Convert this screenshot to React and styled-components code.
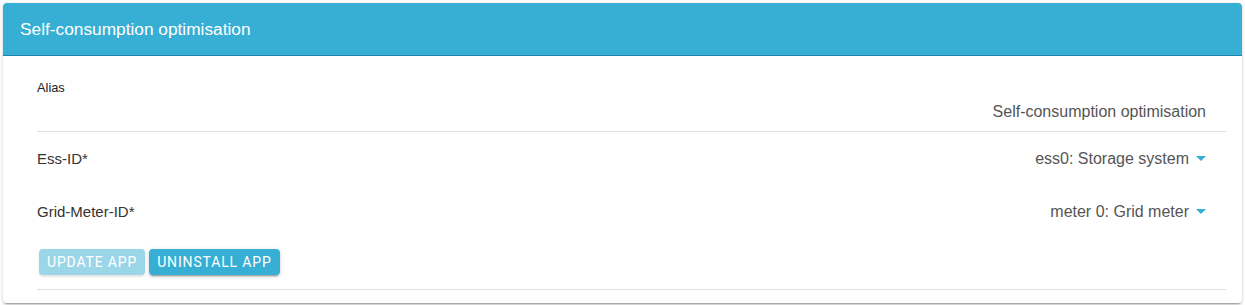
import React from "react";
import styled, { createGlobalStyle } from "styled-components";

const Global = createGlobalStyle`
  html, body { margin: 0; padding: 0; background: #ffffff; }
  body { font-family: "Liberation Sans", Arial, sans-serif; }
`;

const Page = styled.div`
  padding: 3px 3px 3px 3px;
`;

const Card = styled.section`
  background: #fff;
  border-radius: 4px;
  overflow: hidden;
  box-shadow: 0 3px 1px -2px rgba(0,0,0,0.2), 0 2px 2px 0 rgba(0,0,0,0.14), 0 1px 5px 0 rgba(0,0,0,0.12);
`;

const Header = styled.header`
  height: 52px;
  display: flex;
  align-items: center;
  padding: 0 17px;
  background: #37aed3;
  border-bottom: 1px solid #1f85a6;
  color: #fff;
  font-family: "Liberation Sans", Arial, sans-serif;
  font-size: 17.3px;
`;

const Body = styled.div`
  padding: 0 16px 13px 34px;
`;

const AliasItem = styled.div`
  display: flex;
  flex-direction: column;
  padding: 24px 20px 9px 0;
  border-bottom: 1px solid #dedede;
`;

const SmallLabel = styled.label`
  font-size: 12.8px;
  line-height: 16px;
  color: #222;
`;

const AliasValue = styled.div`
  margin-top: 6px;
  text-align: right;
  font-size: 16px;
  line-height: 20px;
  color: #555;
`;

const SelectRow = styled.div`
  height: 53px;
  display: flex;
  align-items: center;
  justify-content: space-between;
  padding-right: 20px;
`;

const RowLabel = styled.span`
  font-size: 15px;
  color: #333;
`;

const SelectValue = styled.span`
  display: flex;
  align-items: center;
  font-size: 16px;
  color: #555;
`;

const Caret = styled.span`
  width: 0;
  height: 0;
  margin-left: 7px;
  border-left: 5px solid transparent;
  border-right: 5px solid transparent;
  border-top: 5px solid #37aed3;
`;

const Actions = styled.div`
  display: flex;
  gap: 4px;
  padding: 11px 0 14px 2px;
  border-bottom: 1px solid #dedede;
`;

const Button = styled.button`
  height: 26px;
  padding: 0 8px;
  border: none;
  border-radius: 4px;
  font-family: Roboto, "Liberation Sans", sans-serif;
  font-size: 14px;
  font-weight: 400;
  letter-spacing: 0.06em;
  text-transform: uppercase;
  color: #fff;
  background: ${(p) => (p.disabled ? "#9bd6e8" : "#37aed3")};
  box-shadow: ${(p) =>
    p.disabled
      ? "0 2px 2px 0 rgba(0,0,0,0.07), 0 1px 4px 0 rgba(0,0,0,0.06)"
      : "0 3px 1px -2px rgba(0,0,0,0.2), 0 2px 2px 0 rgba(0,0,0,0.14), 0 1px 5px 0 rgba(0,0,0,0.12)"};
  cursor: pointer;
`;

const selects = [
  { label: "Ess-ID*", value: "ess0: Storage system" },
  { label: "Grid-Meter-ID*", value: "meter 0: Grid meter" },
];

export default function App() {
  return (
    <>
      <Global />
      <Page>
        <Card>
          <Header>Self-consumption optimisation</Header>
          <Body>
            <AliasItem>
              <SmallLabel>Alias</SmallLabel>
              <AliasValue>Self-consumption optimisation</AliasValue>
            </AliasItem>
            {selects.map((s) => (
              <SelectRow key={s.label}>
                <RowLabel>{s.label}</RowLabel>
                <SelectValue>
                  {s.value}
                  <Caret />
                </SelectValue>
              </SelectRow>
            ))}
            <Actions>
              <Button disabled>Update App</Button>
              <Button>Uninstall App</Button>
            </Actions>
          </Body>
        </Card>
      </Page>
    </>
  );
}
